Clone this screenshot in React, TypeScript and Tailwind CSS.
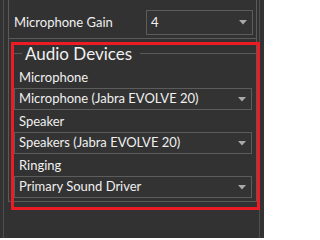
import React from "react";

function Arrow() {
  return (
    <svg width="8" height="5" viewBox="0 0 8 5" className="shrink-0">
      <polygon points="0,0 8,0 4,4.5" fill="#a9a9a9" />
    </svg>
  );
}

function Combo({ value, className }: { value: string; className?: string }) {
  return (
    <div
      className={`flex items-center justify-between border border-[#5c5c5c] bg-[#333333] pl-[4px] pr-[5px] ${className ?? ""}`}
    >
      <span className="whitespace-nowrap">{value}</span>
      <Arrow />
    </div>
  );
}

const devices = [
  { label: "Microphone", value: "Microphone (Jabra EVOLVE 20)" },
  { label: "Speaker", value: "Speakers (Jabra EVOLVE 20)" },
  { label: "Ringing", value: "Primary Sound Driver" },
];

export default function App() {
  return (
    <div
      className="relative w-[264px] h-[238px] overflow-hidden bg-[#323232] text-[13px] text-[#f0f0f0]"
      style={{ fontFamily: 'Lato, "Noto Sans", sans-serif' }}
    >
      <div className="ml-[3px] w-[257px] h-full border-x border-[#4e4e4e]">
        {/* Microphone gain group */}
        <div className="ml-[4px] w-[249px] h-[39px] border-x border-b border-[#5a5a5a] flex items-start pt-[10px] pl-[5px] pr-[3px]">
          <span className="flex-1 leading-[25px]">Microphone Gain</span>
          <Combo value="4" className="w-[107px] h-[25px]" />
        </div>

        {/* Audio devices group */}
        <div className="ml-[4px] w-[249px] border-x border-b border-[#5a5a5a] pb-[3px]">
          <div className="flex items-start h-[27px]">
            <div className="mt-[14px] ml-[4px] w-[9px] h-px bg-[#5a5a5a]" />
            <span className="mx-[3px] text-[17px] leading-[27px] pt-[1px]">Audio Devices</span>
            <div className="mt-[14px] ml-[5px] flex-1 h-px bg-[#5a5a5a]" />
          </div>
          {devices.map((d) => (
            <div key={d.label}>
              <div className="h-[22px] leading-[22px] pl-[10px]">{d.label}</div>
              <Combo value={d.value} className="ml-[5px] mr-[4px] h-[22px]" />
            </div>
          ))}
        </div>
      </div>

      {/* annotation */}
      <div className="absolute left-[11px] top-[42px] w-[249px] h-[168px] border-[3px] border-[#ed1c24]" />
    </div>
  );
}
